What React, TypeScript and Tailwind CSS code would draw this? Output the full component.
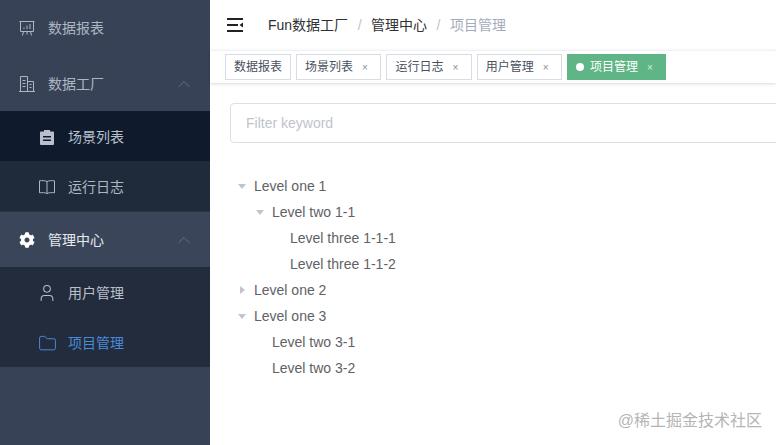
import React from "react";
import { ChevronUp, Folder, User } from "lucide-react";
import { FaCog } from "react-icons/fa";

const font = { fontFamily: '"Liberation Sans", "Noto Sans CJK SC", sans-serif' };

function BoardIcon() {
  return (
    <svg width="16" height="17" viewBox="0 0 16 17" fill="none" stroke="currentColor" strokeWidth="1">
      <path d="M.5 1.500h15M1.500 1.500v10h13v-10M4.500 11.500l-1 4M11.500 11.500l1 4M8 11.500v3" />
      <path d="M5 9V7.500M8 9V5.500M11 9V4" />
    </svg>
  );
}

function FactoryIcon() {
  return (
    <svg width="16" height="16" viewBox="0 0 16 16" fill="none" stroke="currentColor" strokeWidth="1">
      <path d="M0 15.500h16M1.500 15.500V.5h7v15M8.500 5.500h6v10M3.500 4.500h3M3.500 7.500h3M3.500 10.500h3M10.500 8.500h2M10.500 11.500h2" />
    </svg>
  );
}

function ClipboardIcon() {
  return (
    <svg width="14" height="16" viewBox="0 0 14 16">
      <path
        fill="currentColor"
        fillRule="evenodd"
        d="M4 1h6v1.500h3a1 1 0 0 1 1 1V15a1 1 0 0 1-1 1H1a1 1 0 0 1-1-1V3.500a1 1 0 0 1 1-1h3zM3 7v1.500h8V7zm0 3.500V12h8v-1.500z"
      />
    </svg>
  );
}

function BookIcon() {
  return (
    <svg width="16" height="14" viewBox="0 0 16 14" fill="none" stroke="currentColor" strokeWidth="1">
      <path d="M8 1.500C6 .5 3 .5.500.8v12c2.500-.3 5.500-.3 7.500.7 2-1 5-1 7.500-.7V.8C13 .5 10 .5 8 1.500zM8 1.500v12" />
    </svg>
  );
}

function MenuFoldIcon() {
  return (
    <svg width="16" height="14" viewBox="0 0 16 14" fill="#222">
      <rect x="0" y="0" width="16" height="2" />
      <rect x="0" y="6" width="11" height="2" />
      <rect x="0" y="12" width="16" height="2" />
      <path d="M16 4.500v5l-3.500-2.500z" />
    </svg>
  );
}

function MenuRow({ icon, label, open, bright }: { icon: React.ReactNode; label: string; open?: boolean; bright?: boolean }) {
  return (
    <div className={`h-[56px] pl-[19px] pr-[16px] flex items-center text-[14px] ${bright ? "text-[#e6e9ee]" : "text-[#aeb6c2]"}`}>
      <span className="w-[16px] flex justify-center">{icon}</span>
      <span className="ml-[13px] flex-1">{label}</span>
      {open && <ChevronUp className="w-[20px] h-[20px] text-[#768091]" strokeWidth={0.9} />}
    </div>
  );
}

function SubRow({ icon, label, className }: { icon: React.ReactNode; label: string; className: string }) {
  return (
    <div className={`h-[50px] pl-[39px] pt-[2px] flex items-center text-[14px] ${className}`}>
      <span className="w-[16px] flex justify-center">{icon}</span>
      <span className="ml-[13px]">{label}</span>
    </div>
  );
}

function Tag({ label, closable = true }: { label: string; closable?: boolean }) {
  return (
    <div className="h-[26px] pl-[8px] flex items-center border border-[#d8dce5] bg-white text-[12px] text-[#495060]">
      <span>{label}</span>
      {closable ? <span className="ml-[9px] pr-[12.500px] text-[10px] text-[#8a8f99]">×</span> : <span className="pr-[8px]" />}
    </div>
  );
}

function TreeRow({ label, indent, arrow }: { label: string; indent: string; arrow?: "down" | "right" }) {
  return (
    <div className={`h-[26px] flex items-center text-[14px] text-[#606266] ${indent}`}>
      <span className="w-[24px] flex justify-center">
        {arrow === "down" && <span className="w-0 h-0 border-x-[4px] border-x-transparent border-t-[5px] border-t-[#c0c4cc]" />}
        {arrow === "right" && <span className="w-0 h-0 border-y-[4px] border-y-transparent border-l-[5px] border-l-[#c0c4cc]" />}
      </span>
      <span>{label}</span>
    </div>
  );
}

export default function App() {
  return (
    <div className="w-[776px] h-[445px] flex overflow-hidden bg-white relative" style={font}>
      <aside className="w-[210px] shrink-0 bg-[#374256] flex flex-col">
        <MenuRow icon={<BoardIcon />} label="数据报表" />
        <div className="h-[55px] pt-[1px] flex flex-col justify-center">
          <MenuRow icon={<FactoryIcon />} label="数据工厂" open />
        </div>
        <SubRow icon={<ClipboardIcon />} label="场景列表" className="bg-[#0f1b2d] text-[#b9c0cb]" />
        <SubRow icon={<BookIcon />} label="运行日志" className="bg-[#1f2a3a] text-[#aeb6c2]" />
        <div className="h-[56px] bg-[#3a4559] border-t border-[#2b3547]">
          <MenuRow icon={<FaCog className="w-[16px] h-[16px] text-white" />} label="管理中心" open bright />
        </div>
        <SubRow icon={<User className="w-[20px] h-[20px] shrink-0" strokeWidth={1.25} />} label="用户管理" className="bg-[#222c3c] text-[#b9c0cb]" />
        <SubRow icon={<Folder className="w-[19px] h-[19px] shrink-0" strokeWidth={1.25} />} label="项目管理" className="bg-[#222c3c] text-[#4a8ad8]" />
      </aside>

      <main className="flex-1 min-w-0 flex flex-col">
        <header className="h-[50px] shrink-0 pl-[17px] flex items-center text-[14px]">
          <MenuFoldIcon />
          <div className="ml-[25px] flex items-center text-[#303133]">
            <span>Fun数据工厂</span>
            <span className="mx-[9.500px] text-[#c0c4cc]">/</span>
            <span>管理中心</span>
            <span className="mx-[9.500px] text-[#c0c4cc]">/</span>
            <span className="text-[#a3adba]">项目管理</span>
          </div>
        </header>

        <div className="h-[33px] shrink-0 pl-[15px] pt-[3px] flex gap-[5px] border-t border-[#f0f2f5] shadow-[0_1px_3px_rgba(0,0,0,0.15)]">
          <Tag label="数据报表" closable={false} />
          <Tag label="场景列表" />
          <Tag label="运行日志" />
          <Tag label="用户管理" />
          <div className="h-[26px] w-[99px] pl-[9px] flex items-center bg-[#5fb585] text-[12px] text-white">
            <span className="w-[8px] h-[8px] rounded-full bg-white" />
            <span className="ml-[6px]">项目管理</span>
            <span className="ml-[9px] text-[10px] text-[#d5ecdf]">×</span>
          </div>
        </div>

        <div className="pl-[20px] pt-[20px]">
          <div className="w-[600px] h-[40px] px-[15px] flex items-center border border-[#dcdfe6] rounded-[4px] text-[14px] text-[#c0c4cc]">
            Filter keyword
          </div>
          <div className="mt-[30px]">
            <TreeRow label="Level one 1" indent="pl-0" arrow="down" />
            <TreeRow label="Level two 1-1" indent="pl-[18px]" arrow="down" />
            <TreeRow label="Level three 1-1-1" indent="pl-[36px]" />
            <TreeRow label="Level three 1-1-2" indent="pl-[36px]" />
            <TreeRow label="Level one 2" indent="pl-0" arrow="right" />
            <TreeRow label="Level one 3" indent="pl-0" arrow="down" />
            <TreeRow label="Level two 3-1" indent="pl-[18px]" />
            <TreeRow label="Level two 3-2" indent="pl-[18px]" />
          </div>
        </div>
      </main>

      <div className="absolute right-[14px] bottom-[14px] text-[16px] leading-[20px] text-[#b5b5b5]">@稀土掘金技术社区</div>
    </div>
  );
}
